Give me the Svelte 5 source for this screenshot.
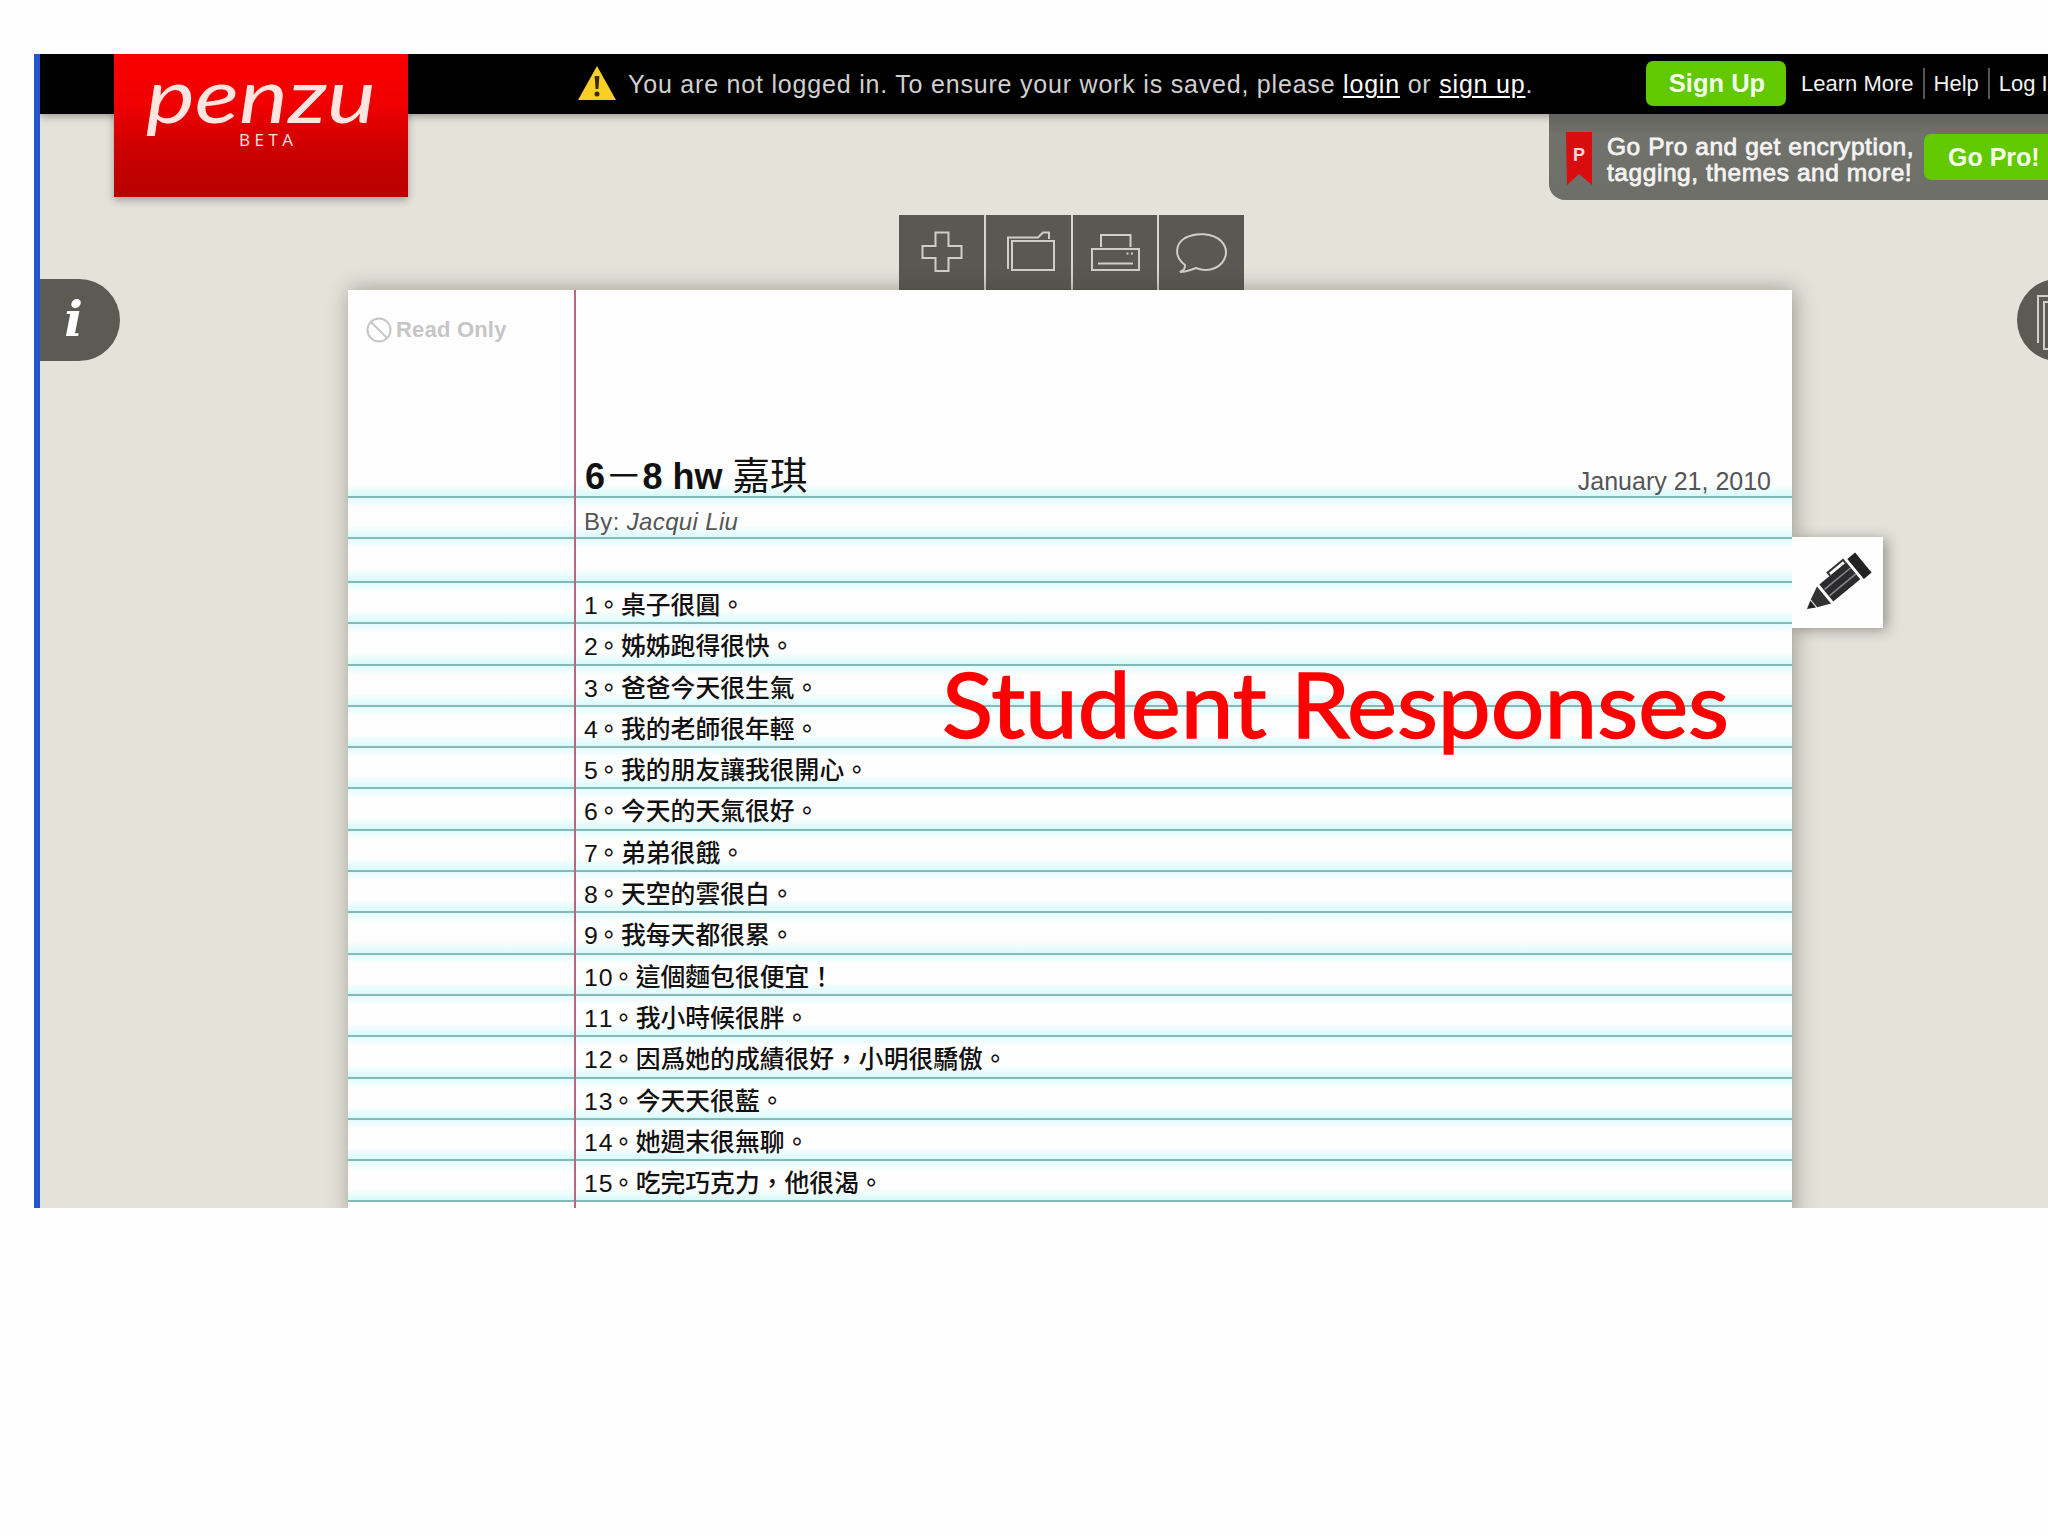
<script>
  const sentences = [
    "桌子很圓。",
    "姊姊跑得很快。",
    "爸爸今天很生氣。",
    "我的老師很年輕。",
    "我的朋友讓我很開心。",
    "今天的天氣很好。",
    "弟弟很餓。",
    "天空的雲很白。",
    "我每天都很累。",
    "這個麵包很便宜！",
    "我小時候很胖。",
    "因爲她的成績很好，小明很驕傲。",
    "今天天很藍。",
    "她週末很無聊。",
    "吃完巧克力，他很渴。",
  ];
</script>

<div class="page">
  <header class="topbar">
    <div class="logo">
      <svg width="294" height="143" viewBox="0 0 294 143">
        <text class="wordmark" x="32" y="69" textLength="230" lengthAdjust="spacingAndGlyphs">penzu</text>
        <text class="beta" x="125" y="92" textLength="54">BETA</text>
      </svg>
    </div>
    <p class="notice">
      <svg class="warning" width="40" height="36" viewBox="0 0 40 36">
        <path d="M20 1 L39 35 H1 Z" fill="#f8cf25" />
        <path d="M17.6 11 h4.8 l-1 13 h-2.8 Z" fill="#3a2a00" />
        <circle cx="20" cy="29" r="2.5" fill="#3a2a00" />
      </svg>
      <span>You are not logged in. To ensure your work is saved, please <a href="#login">login</a> or <a href="#signup">sign up</a>.</span>
    </p>
    <nav class="links">
      <button type="button" class="signup">Sign Up</button>
      <span class="link">Learn More</span>
      <span class="link">Help</span>
      <span class="link">Log In</span>
    </nav>
  </header>

  <aside class="promo">
    <svg class="ribbon" width="26" height="56" viewBox="0 0 26 56">
      <path d="M0 0 H26 V53 L13 42 L1 53 Z" fill="#d90d0d" />
      <text x="7" y="29">P</text>
    </svg>
    <p>Go Pro and get encryption,<br />tagging, themes and more!</p>
    <button type="button" class="gopro">Go Pro!</button>
  </aside>

  <main class="desk">
    <div class="left">
      <div class="info-tab">i</div>
    </div>

    <div class="center">
      <div class="toolbar">
        <div class="tool">
          <svg width="85" height="75" viewBox="0 0 85 75">
            <path d="M36.5 17.5 h13 v13.5 h13 v12 h-13 v13 h-13 v-13 h-13 v-12 h13 Z" />
          </svg>
        </div>
        <div class="tool">
          <svg width="85" height="75" viewBox="0 0 85 75">
            <path d="M22 54 V22.5 H52 L57 17.5 H63 V24" />
            <path d="M26 26 H68 V55 H26 Z" />
          </svg>
        </div>
        <div class="tool">
          <svg width="85" height="75" viewBox="0 0 85 75">
            <path d="M28 32 V20 H57.5 V32" />
            <path d="M19 34 H66 V55 H19 Z M25 48.5 H60" />
            <path d="M53.5 38.5 h2 M58 38.5 h2" />
          </svg>
        </div>
        <div class="tool">
          <svg width="85" height="75" viewBox="0 0 85 75">
            <path d="M26 50 C15 42 16 29 26 23 C37 17 54 18 62 26 C71 35 67 48 56 53 C49 56 42 55 37 53 C32 55 27 57 21 57 C25 55 26 54 26 50 Z" />
          </svg>
        </div>
      </div>

      <article class="paper">
        <div class="head row">
          <div class="read-only">
            <svg width="26" height="26" viewBox="0 0 26 26">
              <circle cx="13" cy="13" r="11.5" />
              <path d="M5 5 L21 21" />
            </svg>
            Read Only
          </div>
          <h1>6<span class="cjk">－</span>8 hw <span class="cjk">嘉琪</span></h1>
          <time>January 21, 2010</time>
        </div>
        <div class="byline row">By: <em>Jacqui Liu</em></div>
        <div class="blank row"></div>
        {#each sentences as sentence, i}
          <div class="entry row"><span class="num">{i + 1}</span>。{sentence}</div>
        {/each}
      </article>
    </div>

    <div class="right">
      <div class="pages-tab">
        <svg width="60" height="82" viewBox="0 0 60 82">
          <path d="M21 64 V17 H50" />
          <path d="M27 70 V23 H56 V70 Z" />
        </svg>
      </div>
      <div class="pencil-tab">
        <svg width="91" height="91" viewBox="0 0 91 91">
          <g transform="translate(15 72) rotate(-39.5)">
            <path d="M0 0 L8 -4.5 V4.5 Z" fill="#222" />
            <path d="M9 -5 L22 -11 V11 L9 5 Z" fill="#333" />
            <path d="M25 -11 H60 V11 H25 Z" fill="#2b2b2d" />
            <path d="M63 -13 H73 V13 H63 Z" fill="#222" />
            <path d="M26 -4 H60 M26 4 H60" stroke="#888" stroke-width="1.5" />
            <path d="M39 -11 V-15 H59 V-11" fill="none" stroke="#333" stroke-width="2" />
          </g>
        </svg>
      </div>
    </div>
  </main>

  <svg class="caption" width="800" height="120" viewBox="0 0 800 120">
    <text x="3" y="82" textLength="787" lengthAdjust="spacingAndGlyphs">Student Responses</text>
  </svg>
</div>

<style>
  :global(body) {
    background: #fefefe;
  }

  .page {
    position: relative;
    box-sizing: border-box;
    width: 2014px;
    height: 1154px;
    margin: 54px 0 0 34px;
    overflow: hidden;
    border-left: 6px solid #2458c8;
    background: #e4e2d9;
    font-family: "Liberation Sans", Arial, "Noto Sans CJK TC", sans-serif;
  }

  p,
  h1 {
    margin: 0;
  }

  button {
    padding: 0;
    border: none;
    border-radius: 7px;
    background: #62c800;
    color: #f4ffe8;
    font-family: inherit;
    font-weight: bold;
    white-space: nowrap;
  }

  .topbar {
    display: flex;
    justify-content: space-between;
    height: 60px;
    background: #000;
    box-shadow: 0 2px 8px rgba(0, 0, 0, 0.35);
  }

  .logo {
    position: absolute;
    top: 0;
    left: 74px;
    z-index: 2;
    height: 143px;
    background: linear-gradient(#fb0000, #f00000 35%, #c80000 70%, #b80000);
    box-shadow: 0 3px 8px rgba(0, 0, 0, 0.3);
  }

  .logo text {
    fill: #ffe4e0;
  }

  .wordmark {
    font: italic 400 75px Lato, sans-serif;
  }

  .beta {
    font: 17px "Open Sans", sans-serif;
  }

  .notice {
    display: flex;
    align-items: flex-start;
    gap: 11px;
    padding: 11px 0 0 537px;
    color: #d0d0d0;
    font-size: 25px;
    line-height: 38px;
    letter-spacing: 0.8px;
    white-space: nowrap;
  }

  .notice a {
    color: #fff;
    text-decoration-thickness: 2px;
    text-underline-offset: 3px;
  }

  .links {
    display: flex;
    align-items: flex-start;
    width: 402px;
    flex: none;
    padding-top: 7px;
    color: #f2f2f2;
    font-size: 22px;
    white-space: nowrap;
  }

  .signup {
    width: 140px;
    height: 45px;
    margin-right: 6px;
    padding-left: 2px;
    flex: none;
    font-size: 25.5px;
  }

  .link {
    margin-top: 7px;
    padding: 0 9px;
    line-height: 31px;
  }

  .link + .link {
    border-left: 2px solid #555;
  }

  .promo {
    position: absolute;
    top: 60px;
    right: 0;
    display: flex;
    align-items: flex-start;
    box-sizing: border-box;
    width: 499px;
    height: 86px;
    padding-left: 17px;
    border-bottom-left-radius: 16px;
    background: linear-gradient(#62625e, #72726d 25%, #6e6e69);
    color: #f4f4f2;
  }

  .ribbon {
    flex: none;
    margin-top: 18px;
  }

  .ribbon text {
    fill: #ffd8d8;
    font-size: 18px;
    font-weight: bold;
  }

  .promo p {
    width: 332px;
    flex: none;
    padding: 20px 0 0 15px;
    box-sizing: border-box;
    font-size: 24.5px;
    line-height: 26px;
    letter-spacing: 0.55px;
    white-space: nowrap;
    -webkit-text-stroke: 0.8px #f4f4f2;
  }

  .gopro {
    width: 140px;
    height: 46px;
    margin-top: 20px;
    padding-left: 24px;
    flex: none;
    font-size: 25px;
    text-align: left;
  }

  .desk {
    display: grid;
    grid-template-columns: 308px 1444px 256px;
    height: 1094px;
  }

  .info-tab {
    width: 80px;
    height: 82px;
    margin-top: 165px;
    padding-right: 13px;
    box-sizing: border-box;
    border-radius: 0 41px 41px 0;
    background: #5b5b53;
    color: #fff;
    font: italic bold 49px/81px "DejaVu Serif", serif;
    text-align: center;
  }

  .toolbar {
    display: flex;
    justify-content: center;
    gap: 2px;
    width: 345px;
    height: 75px;
    margin: 101px 0 0 551px;
    background: #d8d6ce;
  }

  .tool {
    flex: 1;
    overflow: hidden;
    background: #595952;
  }

  .tool path,
  .pages-tab path {
    fill: none;
    stroke: #cfcfca;
    stroke-width: 2;
  }

  .paper {
    position: relative;
    height: 930px;
    background: #fefefe;
    box-shadow: 2px 0 20px rgba(60, 60, 50, 0.45);
    color: #111;
  }

  .paper::after {
    content: "";
    position: absolute;
    top: 0;
    bottom: 0;
    left: 226px;
    width: 2px;
    background: #b8687c;
  }

  .row {
    box-sizing: border-box;
    padding-left: 236px;
    border-bottom: 2px solid #85b9b7;
    background: linear-gradient(#e4fcfc, #fefefe 24%, #fefefe 70%, #d8fafa);
    white-space: nowrap;
  }

  .head {
    display: flex;
    height: 208px;
    padding-left: 18px;
    background: linear-gradient(#fefefe 94%, #d8fafa);
  }

  .read-only {
    display: flex;
    gap: 4px;
    width: 219px;
    height: 26px;
    margin-top: 27px;
    color: #c6c6c6;
    font-size: 22px;
    font-weight: bold;
    line-height: 26px;
    letter-spacing: 0.2px;
  }

  .read-only svg {
    fill: none;
    stroke: #c6c6c6;
    stroke-width: 2;
  }

  h1 {
    flex: 1;
    height: 44px;
    margin-top: 163px;
    font-size: 36px;
    line-height: 48px;
  }

  h1 .cjk {
    font-family: "Noto Sans CJK TC", sans-serif;
    font-size: 37.5px;
    font-weight: 400;
    line-height: 1;
  }

  time {
    margin: 176px 21px 0 0;
    color: #555;
    font-size: 25px;
    line-height: 30px;
  }

  .byline {
    height: 41px;
    color: #555;
    font-size: 24px;
    line-height: 48px;
    letter-spacing: 0.35px;
  }

  .blank {
    height: 44px;
  }

  .entry {
    height: 41.3px;
    font-family: "Noto Sans CJK TC", sans-serif;
    font-size: 24.8px;
    font-weight: 500;
    line-height: 40.5px;
  }

  .num {
    margin-right: -2.5px;
    font-family: "Liberation Sans", Arial, sans-serif;
    font-kerning: none;
    font-weight: 400;
    letter-spacing: 0.9px;
  }

  .right {
    display: flex;
    flex-direction: column;
  }

  .pages-tab {
    width: 82px;
    height: 82px;
    margin: 165px 0 0 225px;
    border-radius: 50%;
    background: #5b5b53;
  }

  .pencil-tab {
    width: 91px;
    height: 91px;
    margin-top: 176px;
    background: #fefefe;
    box-shadow: 4px 2px 12px rgba(60, 60, 50, 0.45);
    clip-path: inset(-20px -20px -20px 0);
  }

  .caption {
    position: absolute;
    top: 602px;
    left: 899px;
  }

  .caption text {
    fill: #f00;
    stroke: #f00;
    stroke-width: 1.5;
    font: 92px Lato, sans-serif;
  }
</style>
